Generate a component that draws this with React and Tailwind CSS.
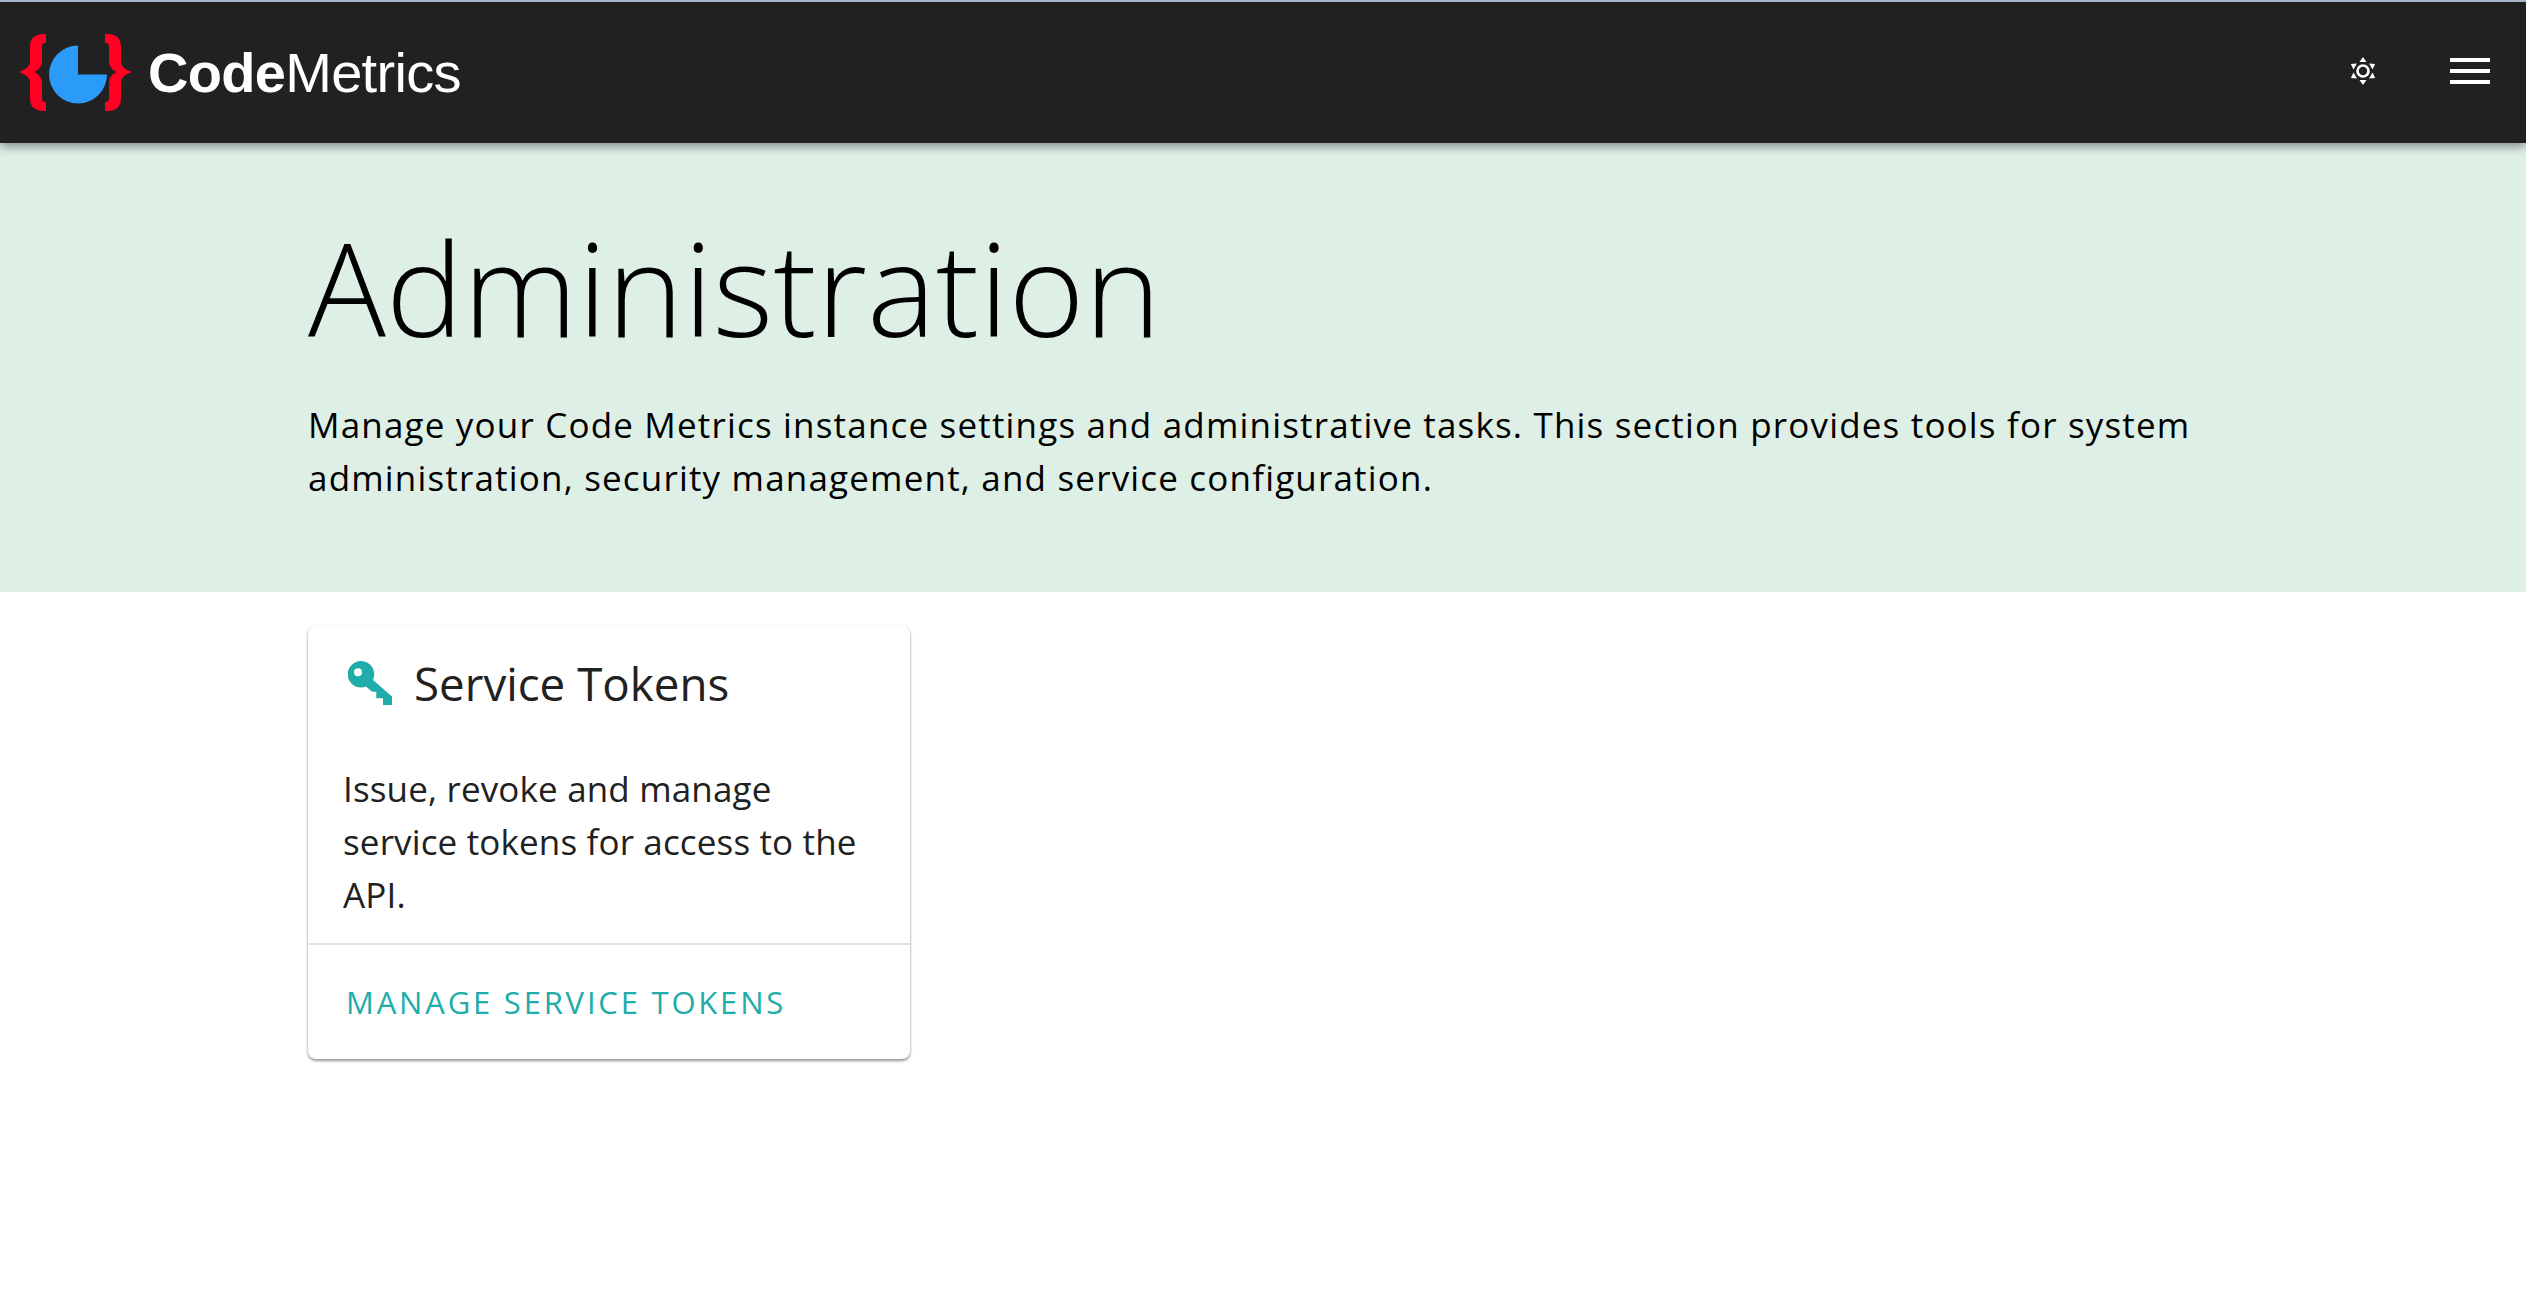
import React from "react";

const BRACE =
  "M27 1 L25 1 C15 1 11 6 11 14 L11 28 C11 33 8 36 0 39 C8 42 11 45 11 50 L11 65 C11 73 15 78 25 78 L27 78 L27 69 C23 69 23 67 23 63 L23 50 C23 45 20 41 15 39 C20 37 23 33 23 28 L23 16 C23 11 23 10 27 10 Z";

function Logo() {
  return (
    <svg width="114" height="80" viewBox="0 0 114 80" className="block">
      <path d={BRACE} fill="#ff0022" />
      <path d={BRACE} fill="#ff0022" transform="translate(113 0) scale(-1 1)" />
      <path d="M59 12.5 A29 29 0 1 0 88 41.5 L59 41.5 Z" fill="#2b9bf9" />
    </svg>
  );
}

function SunIcon() {
  const angles = [0, 60, 120, 180, 240, 300];
  return (
    <svg width="26" height="30" viewBox="0 0 26 30" className="block">
      <circle cx="13" cy="15" r="5.5" fill="none" stroke="white" strokeWidth="2.6" />
      {angles.map((a) => (
        <path key={a} d="M13 1 L16.5 6 L9.5 6 Z" fill="white" transform={`rotate(${a} 13 15)`} />
      ))}
    </svg>
  );
}

function KeyIcon() {
  return (
    <svg width="44" height="44" viewBox="0 0 44 44" className="block">
      <path
        fillRule="evenodd"
        d="M13.3 0 A13.3 13.3 0 0 1 25 19 L44 35.5 L44 44 L35 44 L35 37.3 L28.3 37.3 L28.3 30.7 L24 30.7 L18 25.6 A13.3 13.3 0 1 1 13.3 0 Z M10 7.3 A4 4 0 1 0 10 15.3 A4 4 0 1 0 10 7.3 Z"
        fill="#20aca8"
      />
    </svg>
  );
}

export default function App() {
  return (
    <div className="min-h-[1294px] bg-white font-['Open_Sans',sans-serif]">
      <header className="relative z-10 flex h-[143px] items-center justify-between border-t-2 border-[#a9b5cd] bg-[#212121] pl-[19px] pr-[36px] shadow-[0_3px_10px_rgba(0,0,0,0.45)]">
        <div className="flex items-center gap-[15px]">
          <Logo />
          <div className="font-['Liberation_Sans',sans-serif] text-[56px] leading-none tracking-[-0.7px] text-white">
            <span className="font-bold">Code</span>Metrics
          </div>
        </div>
        <div className="mb-[3px] flex items-center gap-[74px]">
          <SunIcon />
          <div className="flex w-[40px] flex-col gap-[7px]">
            <div className="h-[4px] bg-white" />
            <div className="h-[4px] bg-white" />
            <div className="h-[4px] bg-white" />
          </div>
        </div>
      </header>

      <section className="h-[449px] bg-[#deefe6] px-[308px] pt-[67px]">
        <h1 className="text-[129.7px] font-light leading-[154px] text-black">Administration</h1>
        <p className="mt-[34px] max-w-[1910px] text-[35px] leading-[53px] tracking-[1.18px] text-black">
          Manage your Code Metrics instance settings and administrative tasks. This section provides tools for system administration, security management, and service configuration.
        </p>
      </section>

      <main className="px-[308px] pt-[34px]">
        <div className="w-[602px] rounded-[8px] bg-white shadow-[0_2px_3px_rgba(0,0,0,0.4),0_0_3px_rgba(0,0,0,0.08)]">
          <div className="flex items-center gap-[22px] px-[40px] pt-[29px]">
            <KeyIcon />
            <h2 className="text-[45.7px] leading-[56px] text-[#212121]">Service Tokens</h2>
          </div>
          <p className="px-[35px] pb-[22px] pt-[51px] text-[35px] leading-[53px] tracking-[0.15px] text-[#212121]">
            Issue, revoke and manage service tokens for access to the API.
          </p>
          <div className="border-t-2 border-[#e2e2e2] px-[38px] py-[36px]">
            <a className="block text-[31px] leading-[42px] tracking-[2.8px] text-[#20aca8]">MANAGE SERVICE TOKENS</a>
          </div>
        </div>
      </main>
    </div>
  );
}
